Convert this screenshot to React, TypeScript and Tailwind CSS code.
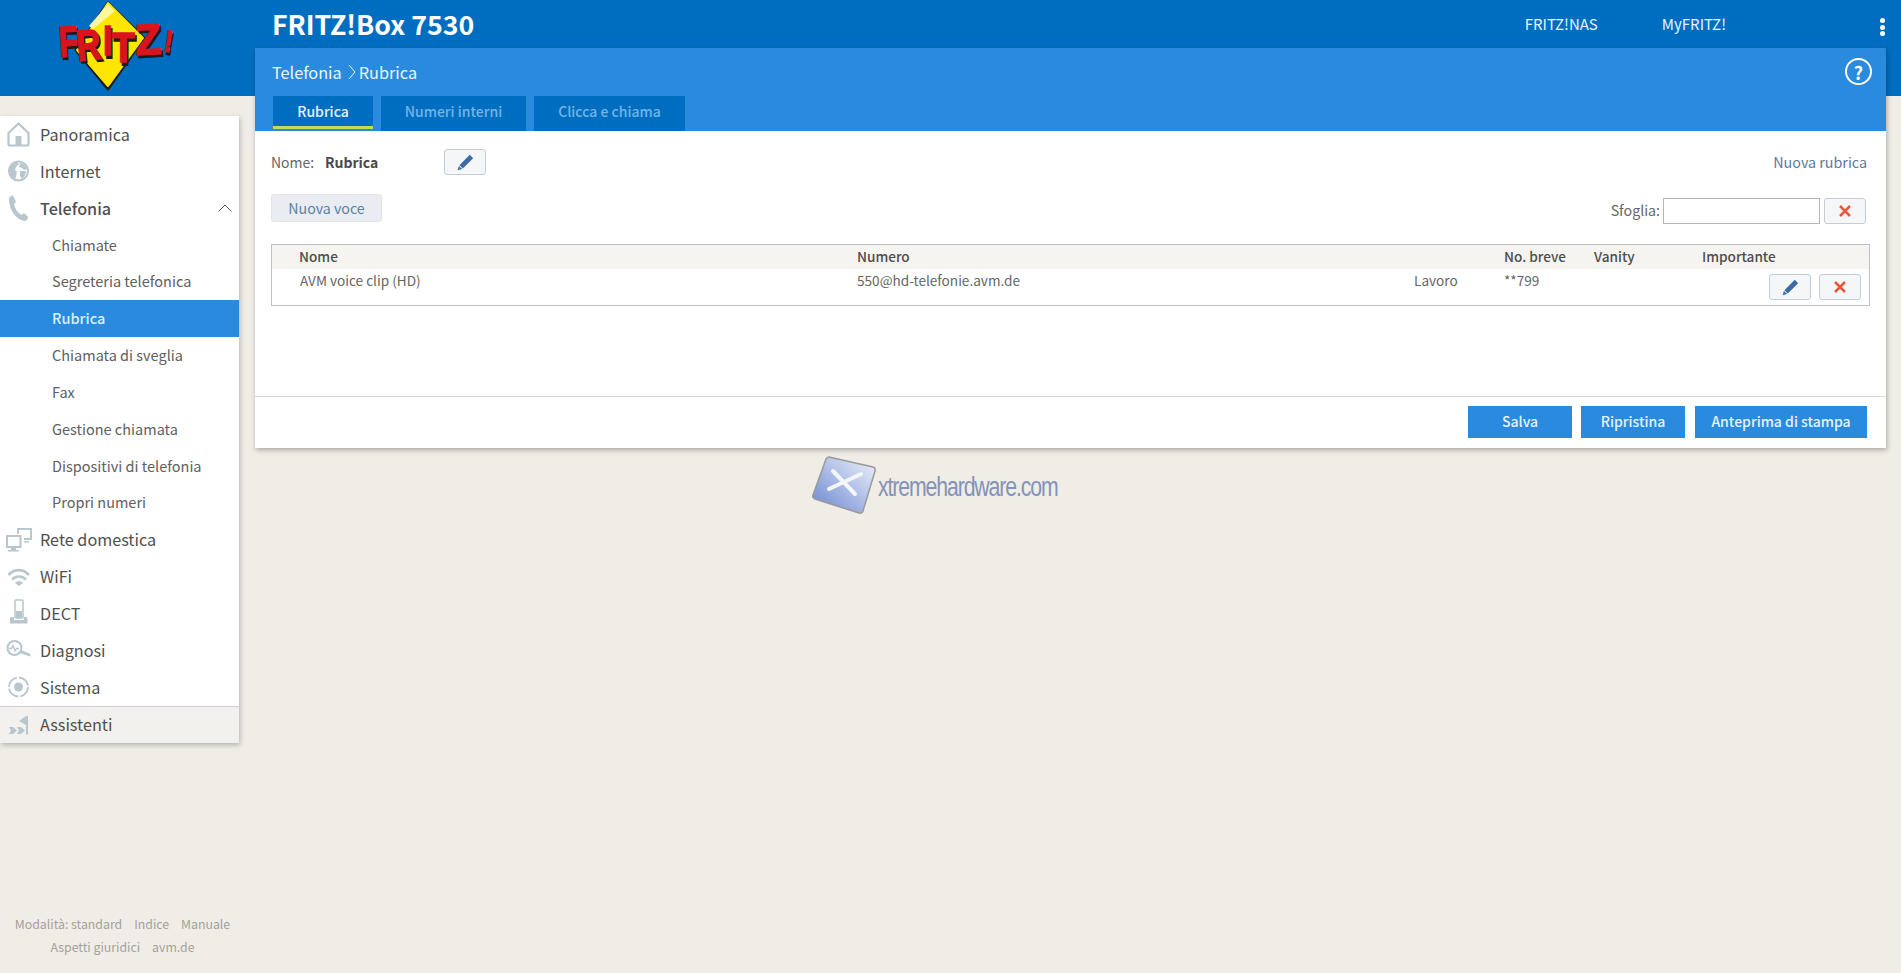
const font = "[font-family:'Noto_Sans_CJK_SC','Noto_Sans',sans-serif]";
const iconGrey = "#b8c6cd";

function IconBox({ children }: { children: React.ReactNode }) {
    return (
        <svg viewBox="0 0 32 32" className="w-8 h-8 shrink-0" fill={iconGrey}>
            {children}
        </svg>
    );
}

function HomeIcon() {
    return (
        <IconBox>
            <path d="M8.500 15 L18.500 5.500 L28.500 15 V26 q0 1.500-1.500 1.500 H10 q-1.500 0-1.500-1.500 Z" fill="none" stroke={iconGrey} strokeWidth="2.200" strokeLinejoin="round" />
            <path d="M15.500 18h6v9h-6z" />
        </IconBox>
    );
}

function GlobeIcon() {
    return (
        <IconBox>
            <circle cx="18.500" cy="16" r="9.500" fill="none" stroke={iconGrey} strokeWidth="2" />
            <path d="M9 16c0-5 4-9 8-9l2 2-3 3-1 3 2 2-1 4-1 4C11 24 9 20 9 16z" />
            <path d="M20 8c3 0 6 3 7 6l-3 1-2-2-3-1zM20 16l6 0c0 3-2 6-4 8l-2-3z" />
        </IconBox>
    );
}

function PhoneIcon() {
    return (
        <IconBox>
            <path d="M9 7 Q9 5 11 4 L13 3.500 L16 10 L14 12 C15 17 18 21 22 23 L24 21 L28 25 Q28 28 25 29 C16 28 9 18 9 7Z" />
        </IconBox>
    );
}

function NetworkIcon() {
    return (
        <IconBox>
            <path d="M17 4h15v12h-8v-2h6V6H19v4h-2z" />
            <path d="M24 17h5v1.500h-5z" />
            <path d="M6 11h15.500v13H16v2h3v1.500H8V26h3v-2H6z M8 13v9h11.500v-9z" fillRule="evenodd" />
        </IconBox>
    );
}

function WifiIcon() {
    return (
        <IconBox>
            <path d="M8.500 14c6-6.500 14.500-6.500 20.500 0" fill="none" stroke={iconGrey} strokeWidth="2.600" />
            <path d="M12 18.500c4-4 10-4 14 0" fill="none" stroke={iconGrey} strokeWidth="2.600" />
            <path d="M15 22c2-2.500 6-2.500 8 0l-4 3z" />
        </IconBox>
    );
}

function DectIcon() {
    return (
        <IconBox>
            <rect x="15" y="3" width="8" height="18" rx="1" fill="none" stroke={iconGrey} strokeWidth="1.500" />
            <path d="M16 14h6v7h-6z" />
            <path d="M10 26.500 V22 q0-2 2-2 h2 v3 h10 v-3 h2 q1.500 0 1.500 2 v4.500 Z" />
        </IconBox>
    );
}

function DiagnosisIcon() {
    return (
        <IconBox>
            <circle cx="14.500" cy="14" r="7" fill="none" stroke={iconGrey} strokeWidth="2" />
            <path d="M9 14.500h2.500l1.500-3 2 5.500 1.500-2.500h2.500" fill="none" stroke={iconGrey} strokeWidth="1.400" />
            <path d="M21 16 L30.500 20 V22.500 L19.500 19z" />
        </IconBox>
    );
}

function SystemIcon() {
    return (
        <IconBox>
            <circle cx="18.500" cy="16" r="4.500" />
            <circle cx="18.500" cy="16" r="9.500" fill="none" stroke={iconGrey} strokeWidth="1.800" strokeDasharray="13 2" />
        </IconBox>
    );
}

function WizardIcon() {
    return (
        <IconBox>
            <path d="M9 18h4l4 3.500-4 3.500H9l2-3.500z" />
            <path d="M17 18h4l4 3.500-4 3.500h-4l2-3.500z" />
            <path d="M26 7h2v18.500h-2z" />
            <path d="M26 7l-7 5 7 4z" />
        </IconBox>
    );
}

function Pencil() {
    return (
        <svg viewBox="0 0 16 16" className="w-[17px] h-[17px]" fill="#3b6ba5">
            <path d="M12 .8l3.200 3.200L5.500 13.700 2.300 10.500z" />
            <path d="M1.800 11.200l3 3-4.200 1.200z" />
        </svg>
    );
}

function Cross() {
    return (
        <svg viewBox="0 0 12 12" className="w-3 h-3" stroke="#e8593a" strokeWidth="2.500">
            <path d="M1 1l10 10M11 1L1 11" />
        </svg>
    );
}

function IconButton({ children }: { children: React.ReactNode }) {
    return (
        <div className="w-[42px] h-[26px] flex items-center justify-center rounded-[3px] border border-[#c5ccd2] bg-[#f4f6f7]">
            {children}
        </div>
    );
}

function LogoLetter({ ch, x, y, size = 43, sx = 1, rot = 0 }: { ch: string; x: number; y: number; size?: number; sx?: number; rot?: number }) {
    return (
        <g transform={`translate(${x} ${y}) rotate(${rot}) scale(${sx} 1)`} fontSize={size}>
            <text x="2" y="2.500" fill="#1c1c1c" stroke="#1c1c1c" strokeWidth="1.800">
                {ch}
            </text>
            <text x="0" y="0" fill="#d8141c" stroke="#d8141c" strokeWidth="1.600">
                {ch}
            </text>
        </g>
    );
}

function Logo() {
    return (
        <svg viewBox="0 0 130 96" className="w-[130px] h-24">
            <path d="M55 3 L91 38 L55 89 L23 50 Z" fill="#1c1c1c" stroke="#1c1c1c" strokeWidth="3" strokeLinejoin="round" />
            <path d="M55 3 L90 38 L55 86 L24 50 Z" fill="#ffe600" stroke="#ffe600" strokeWidth="2" strokeLinejoin="round" />
            <path d="M55 4 L62 11 L40 29 L36 26 Z" fill="#fff6a0" />
            <g fontFamily="'Liberation Sans', sans-serif" fontWeight="700">
                <LogoLetter ch="F" x={7} y={57} sx={0.72} rot={-4} />
                <LogoLetter ch="R" x={25} y={61} sx={0.78} rot={-6} />
                <LogoLetter ch="I" x={50} y={55} sx={0.8} />
                <LogoLetter ch="T" x={59} y={62} sx={0.86} />
                <LogoLetter ch="Z" x={83} y={55} sx={0.98} rot={-3} />
                <LogoLetter ch="!" x={110} y={51} size={30} sx={0.8} rot={9} />
            </g>
        </svg>
    );
}

const topItems = [
    { label: "Panoramica", icon: <HomeIcon /> },
    { label: "Internet", icon: <GlobeIcon /> },
];

const subItems = [
    "Chiamate",
    "Segreteria telefonica",
    "Rubrica",
    "Chiamata di sveglia",
    "Fax",
    "Gestione chiamata",
    "Dispositivi di telefonia",
    "Propri numeri",
];

const bottomItems = [
    { label: "Rete domestica", icon: <NetworkIcon /> },
    { label: "WiFi", icon: <WifiIcon /> },
    { label: "DECT", icon: <DectIcon /> },
    { label: "Diagnosi", icon: <DiagnosisIcon /> },
    { label: "Sistema", icon: <SystemIcon /> },
];

function NavRow({ label, icon, bold }: { label: string; icon: React.ReactNode; bold?: boolean }) {
    return (
        <div className={`h-[36.850px] flex items-center text-[16.200px] leading-[37px] text-[#505050] ${bold ? "font-medium text-[#404040]" : ""}`}>
            <div className="w-10 flex">{icon}</div>
            {label}
        </div>
    );
}

function Sidebar() {
    return (
        <div className="w-[239px] bg-white shadow-[1px_2px_5px_rgba(0,0,0,0.25)]">
            {topItems.map((i) => (
                <NavRow key={i.label} label={i.label} icon={i.icon} />
            ))}
            <div className="relative">
                <NavRow label="Telefonia" icon={<PhoneIcon />} bold />
                <svg viewBox="0 0 14 8" className="absolute right-[7px] top-[14px] w-[14px] h-2" fill="none" stroke="#555" strokeWidth="1">
                    <path d="M0.500 7.500L7 1l6.500 6.500" />
                </svg>
            </div>
            {subItems.map((s) =>
                s === "Rubrica" ? (
                    <div key={s} className="h-[36.850px] pl-[52px] bg-[#2a8ade] text-[#d9f0ff] font-medium text-[14.500px] leading-[36px]">
                        {s}
                    </div>
                ) : (
                    <div key={s} className="h-[36.850px] pl-[52px] text-[#606060] text-[14.500px] leading-[36px]">
                        {s}
                    </div>
                ),
            )}
            {bottomItems.map((i) => (
                <NavRow key={i.label} label={i.label} icon={i.icon} />
            ))}
            <div className="border-t border-[#cfcfcf] bg-[#f3f1ee]">
                <NavRow label="Assistenti" icon={<WizardIcon />} />
            </div>
        </div>
    );
}

function Tab({ label, active, w }: { label: string; active?: boolean; w: string }) {
    return (
        <div
            className={`${w} bg-[#006ec0] flex items-center justify-center text-[14px] leading-5 font-medium ${
                active ? "h-[33px] text-[#e4f3ff] border-b-[3px] border-[#bfdc5a]" : "h-[35px] pb-[5px] text-[#73b5e8]"
            }`}
        >
            {label}
        </div>
    );
}

function ActionButton({ label, w }: { label: string; w: string }) {
    return (
        <div className={`${w} h-8 bg-[#2a8ade] text-[#e4f3ff] font-medium text-[14px] leading-[30px] text-center`}>{label}</div>
    );
}

export default function App() {
    return (
        <div className={`relative flex h-[973px] w-[1901px] overflow-hidden bg-[linear-gradient(#006ec0_96px,#f0ede7_96px)] ${font}`}>
            {/* left column */}
            <div className="w-[255px] shrink-0 flex flex-col">
                <div className="h-[116px] pl-[53px]">
                    <Logo />
                </div>
                <Sidebar />
                <div className="mt-auto pb-[14px] text-center text-[12.300px] leading-[23px] text-[#a3a19d] w-[245px]">
                    <div className="flex justify-center gap-3">
                        <span>Modalità: standard</span>
                        <span>Indice</span>
                        <span>Manuale</span>
                    </div>
                    <div className="flex justify-center gap-3">
                        <span>Aspetti giuridici</span>
                        <span>avm.de</span>
                    </div>
                </div>
            </div>

            {/* right column */}
            <div className="flex-1 min-w-0 pr-[15px]">
                <div className="h-12 flex items-center pl-[17px] relative">
                    <span className="text-[26.700px] leading-[48px] font-bold text-white">FRITZ!Box 7530</span>
                    <div className="ml-auto flex text-[15px] text-[#e4f3ff] leading-[48px]">
                        <span className="mr-[64px]">FRITZ!NAS</span>
                        <span className="mr-[160px]">MyFRITZ!</span>
                    </div>
                    <div className="absolute right-[1px] top-[18px] flex flex-col gap-[1.500px]">
                        <div className="w-[5px] h-[5px] rounded-full bg-white" />
                        <div className="w-[5px] h-[5px] rounded-full bg-white" />
                        <div className="w-[5px] h-[5px] rounded-full bg-white" />
                    </div>
                </div>

                <div className="bg-white shadow-[1px_2px_5px_rgba(0,0,0,0.3)]">
                    <div className="bg-[#2a8ade] h-[83px] pl-[17px] pr-[18px] relative">
                        <div className="h-12 flex items-center text-[16.300px] leading-[48px] text-[#eaf6ff]">
                            Telefonia
                            <svg viewBox="0 0 8 16" className="w-2 h-4 ml-[6px] mr-[3px]" fill="none" stroke="#eaf6ff" strokeWidth="1">
                                <path d="M1 1l6 7-6 7" />
                            </svg>
                            Rubrica
                        </div>
                        <div className="flex gap-2 pl-px">
                            <Tab label="Rubrica" active w="w-[100px]" />
                            <Tab label="Numeri interni" w="w-[145px]" />
                            <Tab label="Clicca e chiama" w="w-[151px]" />
                        </div>
                        <div className="absolute right-[14px] top-[10px] w-[27px] h-[27px] rounded-full border-2 border-white flex items-center justify-center text-white font-bold text-[18px] leading-none">
                            ?
                        </div>
                    </div>

                    <div className="px-4 h-[265px] flex flex-col">
                        <div className="pt-[18px] flex items-center h-[44px] text-[14px] leading-[26px]">
                            <span className="text-[#666] w-[54px]">Nome:</span>
                            <span className="font-bold text-[#4a4a4a] w-[119px]">Rubrica</span>
                            <IconButton><Pencil /></IconButton>
                            <span className="ml-auto text-[#5d7a9b] text-[14.300px] pr-[3px]">Nuova rubrica</span>
                        </div>
                        <div className="flex items-start mt-[19px] h-[28px]">
                            <div className="w-[111px] h-[28px] rounded-[3px] border border-[#e0e4e8] bg-[#e9edf1] text-[#5d7fa8] text-[14.200px] leading-[26px] text-center">
                                Nuova voce
                            </div>
                            <div className="ml-auto flex items-center text-[#666] text-[14.200px] pr-[4px] pt-[3px]">
                                <span className="mr-[3px]">Sfoglia:</span>
                                <div className="w-[157px] h-[26px] mt-[1px] border border-[#b5b5b5] bg-white mr-[4px]" />
                                <IconButton><Cross /></IconButton>
                            </div>
                        </div>

                        <div className="mt-[22px] border border-[#c0c0c0] h-[62px] text-[13.600px]">
                            <div className="h-6 bg-[#f5f4f1] flex items-center text-[#4d4d4d] font-medium leading-[22px] pb-[2px]">
                                <span className="w-[585px] pl-[27px]">Nome</span>
                                <span className="w-[647px]">Numero</span>
                                <span className="w-[90px]">No. breve</span>
                                <span className="w-[108px]">Vanity</span>
                                <span>Importante</span>
                            </div>
                            <div className="h-9 flex text-[#666] leading-[22px]">
                                <span className="w-[585px] pl-[28px]">AVM voice clip (HD)</span>
                                <span className="w-[557px]">550@hd-telefonie.avm.de</span>
                                <span className="w-[90px]">Lavoro</span>
                                <span>**799</span>
                                <div className="ml-auto flex gap-2 pt-[5px] pr-2">
                                    <IconButton><Pencil /></IconButton>
                                    <IconButton><Cross /></IconButton>
                                </div>
                            </div>
                        </div>
                    </div>

                    <div className="border-t border-[#d8d8d8] h-[52px] flex justify-end items-start pt-[9px] gap-[9px] pr-[19px]">
                        <ActionButton label="Salva" w="w-[104px]" />
                        <ActionButton label="Ripristina" w="w-[104px]" />
                        <div className="ml-px">
                            <ActionButton label="Anteprima di stampa" w="w-[172px]" />
                        </div>
                    </div>
                </div>
            </div>

            {/* watermark pasted on the screenshot */}
            <div className="absolute left-[811px] top-[456px] flex items-center">
                <svg viewBox="0 0 66 60" className="w-[66px] h-[60px]">
                    <defs>
                        <linearGradient id="wm" x1="1" y1="0" x2="0" y2="1">
                            <stop offset="0" stopColor="#f0f4fb" />
                            <stop offset="1" stopColor="#6784d0" />
                        </linearGradient>
                    </defs>
                    <path d="M18 1 L62 11 Q65 12 64 15 L52 55 Q51 58 48 57 L4 43 Q1 42 2 39 L15 3 Q16 1 18 1Z" fill="url(#wm)" stroke="#9a9a9a" strokeWidth="1.500" />
                    <path d="M22 15 L44 38 M50 18 L18 33" stroke="#f4f6fb" strokeWidth="4" strokeLinecap="round" />
                </svg>
                <span className="origin-left scale-x-[0.786] whitespace-nowrap text-[27px] leading-none text-[#8393b8] ml-[1px] mt-[3px] [font-family:'Liberation_Sans',sans-serif] tracking-[-1.400px]">
                    xtremehardware.com
                </span>
            </div>
        </div>
    );
}
